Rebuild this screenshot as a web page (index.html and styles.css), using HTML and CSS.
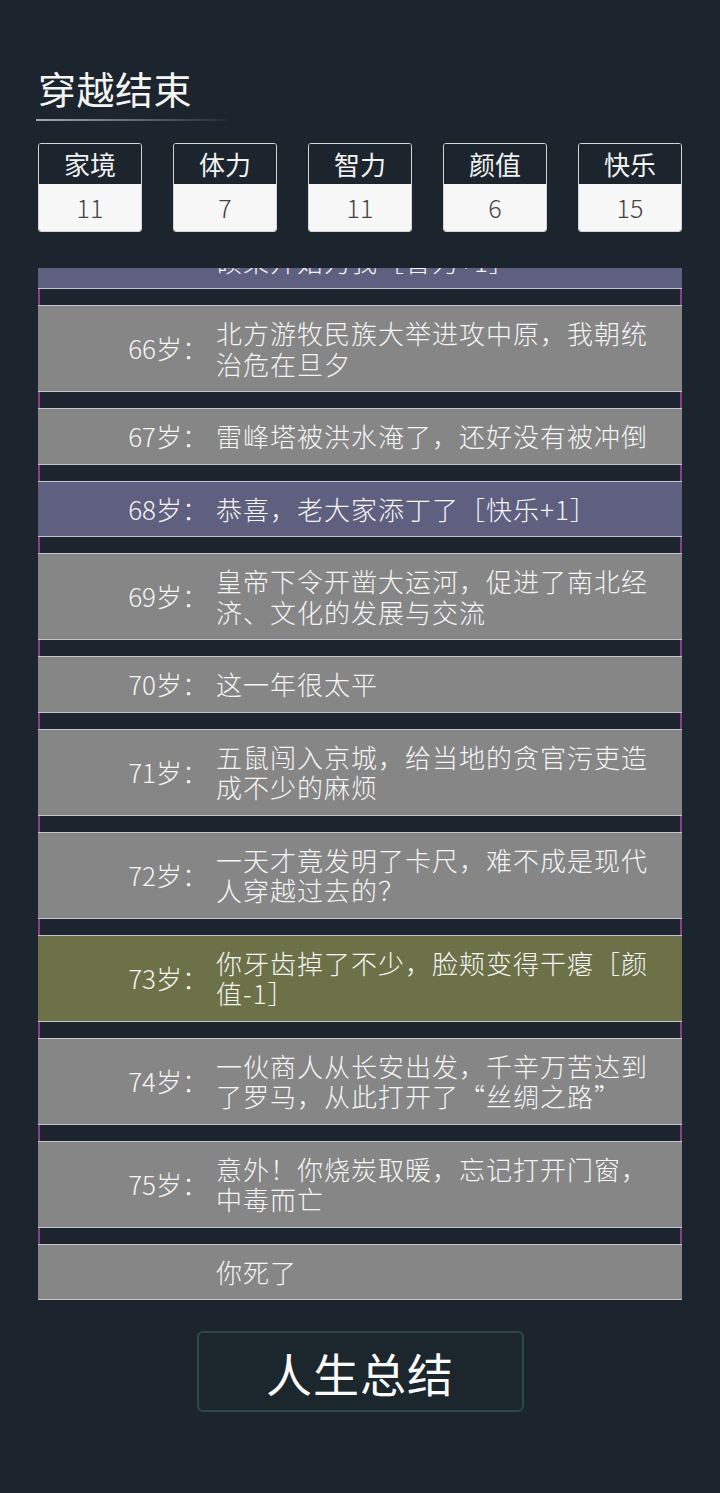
FILE: index.html
```html
<!DOCTYPE html>
<html lang="zh-CN">
<head>
  <meta charset="UTF-8" />
  <meta name="viewport" content="width=device-width, initial-scale=1.0"/>
  <title>穿越结束</title>
  <link rel="stylesheet" href="styles.css">
</head>
<body>

  <div class="page">
    <h1 class="title">穿越结束</h1>
    <div class="title-line"></div>

    <div class="stats">
      <div class="stat"><div class="stat-name">家境</div><div class="stat-value">11</div></div>
      <div class="stat"><div class="stat-name">体力</div><div class="stat-value">7</div></div>
      <div class="stat"><div class="stat-name">智力</div><div class="stat-value">11</div></div>
      <div class="stat"><div class="stat-name">颜值</div><div class="stat-value">6</div></div>
      <div class="stat"><div class="stat-name">快乐</div><div class="stat-value">15</div></div>
    </div>

    <div class="log" id="log">
      <div class="log-inner">
        <div class="entry good"><span class="age">65岁：</span><span class="text">你在田间试种新的作物，多年以后，硕果开始为我［智力+1］</span></div>
        <div class="entry"><span class="age">66岁：</span><span class="text">北方游牧民族大举进攻中原，我朝统治危在旦夕</span></div>
        <div class="entry"><span class="age">67岁：</span><span class="text">雷峰塔被洪水淹了，还好没有被冲倒</span></div>
        <div class="entry good"><span class="age">68岁：</span><span class="text">恭喜，老大家添丁了［快乐+1］</span></div>
        <div class="entry"><span class="age">69岁：</span><span class="text">皇帝下令开凿大运河，促进了南北经济、文化的发展与交流</span></div>
        <div class="entry"><span class="age">70岁：</span><span class="text">这一年很太平</span></div>
        <div class="entry"><span class="age">71岁：</span><span class="text">五鼠闯入京城，给当地的贪官污吏造成不少的麻烦</span></div>
        <div class="entry"><span class="age">72岁：</span><span class="text">一天才竟发明了卡尺，难不成是现代人穿越过去的？</span></div>
        <div class="entry bad"><span class="age">73岁：</span><span class="text">你牙齿掉了不少，脸颊变得干瘪［颜值-1］</span></div>
        <div class="entry"><span class="age">74岁：</span><span class="text">一伙商人从长安出发，千辛万苦达到了罗马，从此打开了“丝绸之路”</span></div>
        <div class="entry"><span class="age">75岁：</span><span class="text">意外！你烧炭取暖，忘记打开门窗，中毒而亡</span></div>
        <div class="entry"><span class="age"></span><span class="text">你死了</span></div>
      </div>
    </div>

    <button class="summary-btn">人生总结</button>
  </div>

  <script>
    // always show the latest year
    const log = document.getElementById('log');
    log.scrollTop = log.scrollHeight;
  </script>
</body>
</html>
```

FILE: styles.css
```css
body {
  margin: 0;
  background-color: #1c252d;
  color: #f5f5f5;
  font-family: "Noto Sans CJK SC", "Noto Sans", sans-serif;
  font-weight: 300;
}
.page {
  padding: 63px 38px 0;
}
.title {
  margin: 0;
  font-size: 38px;
  font-weight: normal;
  line-height: 50px;
  letter-spacing: 0.5px;
}
.title-line {
  width: 192px;
  height: 2px;
  margin: 6px 0 0 -2px;
  background: linear-gradient(to right, #a4a9ae, rgba(164, 169, 174, 0.05));
}
.stats {
  display: flex;
  justify-content: space-between;
  margin-top: 22px;
}
.stat {
  width: 102px;
  border: 1px solid #d4d4d4;
  border-radius: 3px;
  overflow: hidden;
  text-align: center;
}
.stat-name {
  height: 40px;
  line-height: 40px;
  font-size: 26px;
  font-weight: normal;
  color: #f2f2f2;
  background-color: #1c252d;
}
.stat-value {
  height: 47px;
  line-height: 47px;
  font-size: 25px;
  color: #444;
  background-color: #f7f7f7;
}
.log {
  margin-top: 36px;
  height: 1032px;
  overflow-y: auto;
  scrollbar-width: none;
}
.log-inner {
  border-left: 2px solid #8a3e8c;
  border-right: 2px solid #8a3e8c;
}
.entry {
  display: flex;
  align-items: center;
  margin: 0 -2px;
  padding: 12px 0;
  border-top: 1px solid #c4c4cc;
  border-bottom: 1px solid #c4c4cc;
  background-color: #868686;
  font-size: 26px;
  line-height: 30.5px;
}
.entry + .entry {
  margin-top: 16px;
}
.entry.good {
  background-color: #5f5f80;
}
.entry.bad {
  background-color: #6c7147;
}
.age {
  flex: 0 0 170px;
  padding-right: 8px;
  text-align: right;
}
.text {
  flex: 1;
  padding-right: 26px;
  letter-spacing: 1px;
}
.summary-btn {
  display: block;
  width: 327px;
  height: 81px;
  margin: 31px auto 0;
  border: 2px solid #2d484b;
  border-radius: 6px;
  background-color: #1b262d;
  color: #fafafa;
  font-family: "Noto Sans CJK SC", sans-serif;
  font-size: 46px;
  font-weight: normal;
  letter-spacing: 1px;
  cursor: pointer;
}
```
